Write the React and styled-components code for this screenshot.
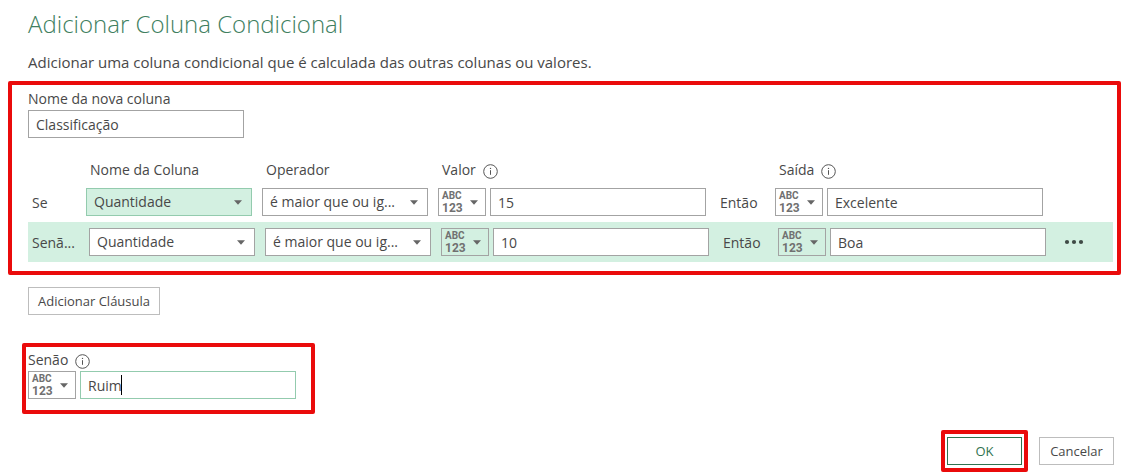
import React, { useState } from "react";
import styled, { createGlobalStyle, css } from "styled-components";

const color = {
  text: "#484848",
  green: "#2f7350",
  titleGreen: "#417f5f",
  mint: "#d3f0e1",
  mintBorder: "#93cbae",
  border: "#a3a3a3",
  softBorder: "#bdbdbd",
  red: "#ea0b0b",
};

const GlobalStyle = createGlobalStyle`
  *, *::before, *::after { box-sizing: border-box; }
  body {
    margin: 0;
    background: #fff;
    color: ${color.text};
    font-family: "Open Sans", "Noto Sans", sans-serif;
    font-size: 14px;
    line-height: 20px;
  }
  button, input, select { font: inherit; color: inherit; border-radius: 0; }
`;

const Dialog = styled.form`
  display: flex;
  flex-direction: column;
  align-items: flex-start;
  padding: 8px 16px 4px 8px;
`;

const Title = styled.h1`
  margin: 0 0 12px 20px;
  color: ${color.titleGreen};
  font-size: 24px;
  line-height: 32px;
  font-weight: 300;
`;

const Description = styled.p`
  margin: 0 0 9px 20px;
  font-size: 15px;
`;

const Highlight = styled.section`
  border: 4px solid ${color.red};
  border-radius: 2px;
`;

const ClausePanel = styled(Highlight)`
  align-self: stretch;
  padding: 4px 4px 9px 16px;
`;

const ElsePanel = styled(Highlight)`
  width: 293px;
  max-width: 100%;
  margin: 28px 0 16px 14px;
  padding: 3px 15px 11px 2px;
`;

const ConfirmFrame = styled(Highlight)`
  padding: 3px 2px;
`;

const Field = styled.div`
  display: flex;
  flex-direction: column;
  width: 216px;
  gap: 1px;
`;

const TextBox = styled.input`
  width: 100%;
  min-width: 0;
  height: 28px;
  padding: 0 7px;
  background: #fff;
  border: 1px solid ${(p) => (p.$active ? color.mintBorder : color.border)};
  outline: none;
`;

const rowColumns = css`
  display: grid;
  grid-template-columns:
    ${(p) => (p.$selected ? "47px" : "44px")}
    minmax(0, 166fr) minmax(0, 166fr) minmax(0, 268fr)
    49px minmax(0, 268fr) ${(p) => (p.$selected ? "57px" : "60px")};
  column-gap: 10px;
  align-items: center;
  padding-left: 4px;
`;

const HeaderRow = styled.div`
  ${rowColumns}
  margin: 22px 0 8px;
`;

const ClauseRow = styled.div`
  ${rowColumns}
  background: ${(p) => (p.$selected ? color.mint : "transparent")};
  padding-top: ${(p) => (p.$selected ? "6px" : "0")};
  padding-bottom: 6px;
`;

const HeaderCell = styled.div`
  display: flex;
  align-items: center;
  gap: 7px;
  padding-left: 4px;
`;

const RowLabel = styled.span`
  padding-top: 2px;
  white-space: nowrap;
`;

const ThenLabel = styled(RowLabel)`
  padding-left: 4px;
`;

const SelectWrap = styled.div`
  position: relative;
  min-width: 0;
`;

const Select = styled.select`
  display: block;
  appearance: none;
  width: 100%;
  height: 28px;
  padding: 0 24px 0 7px;
  background: ${(p) => (p.$active ? color.mint : "#fff")};
  border: 1px solid ${(p) => (p.$active ? color.mintBorder : color.border)};
  outline: none;
`;

const SelectArrow = styled.span`
  position: absolute;
  top: 0;
  right: 10px;
  height: 28px;
  display: flex;
  align-items: center;
  pointer-events: none;
`;

const ValueGroup = styled.div`
  display: flex;
  gap: 4px;
`;

const TypeButton = styled.button`
  flex: none;
  display: flex;
  align-items: center;
  justify-content: space-between;
  width: 48px;
  height: 28px;
  padding: 0 7px 0 3px;
  background: transparent;
  border: 1px solid ${color.border};
`;

const TypeMark = styled.span`
  display: flex;
  flex-direction: column;
  align-items: flex-start;
  color: #707070;
  font-family: Roboto, sans-serif;
  font-size: 10px;
  line-height: 12px;
  font-weight: 700;
`;

const TypeDigits = styled.span`
  font-size: 12px;
  line-height: 12px;
`;

const MoreButton = styled.button`
  display: flex;
  align-items: center;
  justify-content: center;
  width: 36px;
  height: 28px;
  padding: 0;
  background: none;
  border: 0;
`;

const Button = styled.button`
  height: 28px;
  min-width: 75px;
  padding: 0 9px;
  background: #fff;
  border: 1px solid ${(p) => (p.$primary ? color.green : color.softBorder)};
  color: ${(p) => (p.$primary ? color.green : color.text)};
  font-size: 13px;
  line-height: 20px;
  white-space: nowrap;
`;

const AddButton = styled(Button)`
  margin: 12px 0 0 20px;
`;

const ElseLabel = styled.label`
  display: flex;
  align-items: center;
  gap: 7px;
  margin-bottom: 1px;
`;

const CaretBox = styled.div`
  position: relative;
  display: flex;
  flex: 1;
`;

const TextCaret = styled.span`
  position: absolute;
  top: 4px;
  left: 41px;
  width: 1px;
  height: 20px;
  background: #000;
`;

const Footer = styled.footer`
  display: flex;
  align-items: center;
  align-self: flex-end;
  gap: 11px;
  padding-right: 7px;
`;

function Arrow() {
  return (
    <svg width="8" height="5" viewBox="0 0 8 5" aria-hidden="true">
      <path d="M0 0.3h8L4 4.8z" fill="#666" />
    </svg>
  );
}

const InfoSvg = styled.svg`
  display: block;
  margin-top: 3px;
`;

function InfoIcon() {
  return (
    <InfoSvg width="15" height="15" viewBox="0 0 15 15" aria-hidden="true">
      <circle cx="7.5" cy="7.5" r="6.8" fill="none" stroke="#555" strokeWidth="1" />
      <path d="M7.5 6.2v4.6" stroke="#555" strokeWidth="1" />
      <circle cx="7.5" cy="4.4" r="0.7" fill="#555" />
    </InfoSvg>
  );
}

function Dropdown({ label, options, active }) {
  return (
    <SelectWrap>
      <Select aria-label={label} $active={active}>
        {options.map((o) => (
          <option key={o}>{o}</option>
        ))}
      </Select>
      <SelectArrow>
        <Arrow />
      </SelectArrow>
    </SelectWrap>
  );
}

function TypePicker({ label }) {
  return (
    <TypeButton type="button" aria-haspopup="menu" aria-label={label}>
      <TypeMark>
        <span>ABC</span>
        <TypeDigits>123</TypeDigits>
      </TypeMark>
      <Arrow />
    </TypeButton>
  );
}

function Clause({ prefix, value, output, selected }) {
  return (
    <ClauseRow $selected={selected}>
      <RowLabel>{prefix}</RowLabel>
      <Dropdown label="Nome da Coluna" options={["Quantidade"]} active={!selected} />
      <Dropdown label="Operador" options={["é maior que ou ig..."]} />
      <ValueGroup>
        <TypePicker label="Tipo do valor" />
        <TextBox aria-label="Valor" defaultValue={value} />
      </ValueGroup>
      <ThenLabel>Então</ThenLabel>
      <ValueGroup>
        <TypePicker label="Tipo da saída" />
        <TextBox aria-label="Saída" defaultValue={output} />
      </ValueGroup>
      {selected && (
        <MoreButton type="button" aria-label="Mais opções">
          <svg width="20" height="6" viewBox="0 0 20 6" aria-hidden="true">
            <g fill="#3f4a45">
              <circle cx="3" cy="3" r="2.1" />
              <circle cx="10" cy="3" r="2.1" />
              <circle cx="17" cy="3" r="2.1" />
            </g>
          </svg>
        </MoreButton>
      )}
    </ClauseRow>
  );
}

const clauses = [
  { prefix: "Se", value: "15", output: "Excelente" },
  { prefix: "Senã...", value: "10", output: "Boa", selected: true },
];

export default function App() {
  const [otherwise, setOtherwise] = useState("Ruim");

  return (
    <>
      <GlobalStyle />
      <Dialog onSubmit={(e) => e.preventDefault()}>
        <Title>Adicionar Coluna Condicional</Title>
        <Description>
          Adicionar uma coluna condicional que é calculada das outras colunas ou valores.
        </Description>

        <ClausePanel>
          <Field>
            <label htmlFor="column-name">Nome da nova coluna</label>
            <TextBox id="column-name" defaultValue="Classificação" />
          </Field>
          <HeaderRow>
            <span />
            <HeaderCell>Nome da Coluna</HeaderCell>
            <HeaderCell>Operador</HeaderCell>
            <HeaderCell>
              Valor <InfoIcon />
            </HeaderCell>
            <span />
            <HeaderCell>
              Saída <InfoIcon />
            </HeaderCell>
          </HeaderRow>
          {clauses.map((c) => (
            <Clause key={c.prefix} {...c} />
          ))}
        </ClausePanel>

        <AddButton type="button">Adicionar Cláusula</AddButton>

        <ElsePanel>
          <ElseLabel htmlFor="otherwise">
            Senão <InfoIcon />
          </ElseLabel>
          <ValueGroup>
            <TypePicker label="Tipo do valor padrão" />
            <CaretBox>
              <TextBox
                id="otherwise"
                $active
                value={otherwise}
                onChange={(e) => setOtherwise(e.target.value)}
              />
              {otherwise === "Ruim" && <TextCaret />}
            </CaretBox>
          </ValueGroup>
        </ElsePanel>

        <Footer>
          <ConfirmFrame>
            <Button type="submit" $primary>
              OK
            </Button>
          </ConfirmFrame>
          <Button type="button">Cancelar</Button>
        </Footer>
      </Dialog>
    </>
  );
}
